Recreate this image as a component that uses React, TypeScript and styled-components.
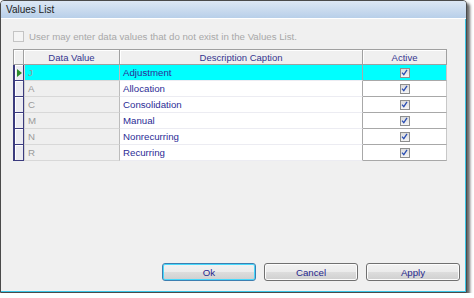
import React, { useState } from 'react';
import styled, { createGlobalStyle } from 'styled-components';

const GlobalStyle = createGlobalStyle`
    html, body {
        margin: 0;
        padding: 0;
        background: #ffffff;
    }
    body {
        font-family: "Liberation Sans", Arial, sans-serif;
        font-size: 9px;
    }
`;

interface IValue {
    code: string,
    caption: string,
    active: boolean
}

const Window = styled.div`
    width: 465px;
    height: 291px;
    border: 1px solid #4a4a4a;
    border-radius: 4px 4px 0 0;
    box-shadow: 3px 3px 3px rgba(0, 0, 0, 0.6);
    display: flex;
    flex-direction: column;
    overflow: hidden;
    background: #f0f0f0;
`;

const TitleBar = styled.div`
    height: 17px;
    flex: none;
    display: flex;
    align-items: center;
    padding-left: 5px;
    background: linear-gradient(#dce7f4, #b8cfe9);
    border-bottom: 1px solid #ffffff;
    color: #1e1e1e;
    font-size: 10px;
`;

const Body = styled.div`
    flex: 1;
    display: flex;
    flex-direction: column;
    padding: 12px 0 0 12px;
    border-right: 1px solid #3cc6e6;
    border-bottom: 1px solid #3cc6e6;
`;

const OptionRow = styled.label`
    display: flex;
    align-items: center;
    gap: 5px;
    height: 10px;
    color: #a8a8a8;
    font-size: 9.7px;
`;

const DisabledBox = styled.span`
    width: 9px;
    height: 9px;
    border: 1px solid #c4c4c4;
    background: #f4f4f4;
`;

const Grid = styled.div`
    margin-top: 8px;
    width: 434px;
    display: grid;
    grid-template-columns: 11px 96px 243px 84px;
    grid-auto-rows: 16px;
`;

const HeaderCell = styled.div`
    display: flex;
    align-items: center;
    justify-content: center;
    background: #f0f0f0;
    border: 1px solid #a0a0a0;
    border-left-width: 0;
    box-shadow: inset 1px 1px 0 #ffffff;
    color: #35358f;
    font-size: 9.5px;
    &:first-child {
        border-left-width: 1px;
    }
`;

const RowHead = styled.div`
    display: flex;
    align-items: center;
    padding-left: 2px;
    background: #ebebf2;
    border: 1px solid #3b3b7e;
    border-top-width: 0;
    border-left-width: 2px;
    box-shadow: inset 1px 1px 0 #ffffff;
`;

const Pointer = styled.span`
    width: 0;
    height: 0;
    border-top: 4px solid transparent;
    border-bottom: 4px solid transparent;
    border-left: 5px solid #2c8c2c;
`;

const Cell = styled.div<{ selected: boolean, kind: 'code' | 'caption' | 'active' }>`
    display: flex;
    align-items: center;
    justify-content: ${props => props.kind === 'active' ? 'center' : 'flex-start'};
    padding-left: ${props => props.kind === 'active' ? '0' : '3px'};
    background: ${props => props.selected ? '#00ffff' : props.kind === 'code' ? '#efefef' : '#ffffff'};
    color: ${props => props.kind === 'code' ? '#9a9a9a' : '#2c2c96'};
    font-size: 9.7px;
    border-bottom: 1px solid ${props => props.kind === 'active' ? '#a8a8a8' : props.kind === 'code' ? '#d8d8d8' : '#ececf2'};
    border-right: 1px solid ${props => props.kind === 'caption' ? '#a8a8a8' : props.kind === 'code' ? '#bcbcbc' : '#c8c8c8'};
    border-left: ${props => props.kind === 'code' ? '1px solid #d0d0d0' : '0'};
    box-sizing: border-box;
`;

const Check = styled.span`
    width: 8px;
    height: 8px;
    border: 1px solid #8e8f8f;
    background: linear-gradient(#dcdcdc, #f4f4f4);
    display: flex;
    align-items: center;
    justify-content: center;
`;

const Footer = styled.div`
    margin-top: auto;
    margin-bottom: 10px;
    align-self: flex-end;
    margin-right: 5px;
    display: flex;
    gap: 8px;
`;

const Button = styled.button<{ primary?: boolean }>`
    width: 94px;
    height: 18px;
    padding: 0;
    font-family: "Liberation Sans", Arial, sans-serif;
    font-size: 9.7px;
    color: #27278c;
    border-radius: 3px;
    border: 1px solid ${props => props.primary ? '#3c7fb1' : '#707070'};
    box-shadow: inset 0 0 0 1px ${props => props.primary ? '#48d8fb' : '#fcfcfc'};
    background: linear-gradient(#f2f2f2 0%, #ebebeb 50%, #dddddd 51%, #cfcfcf 100%);
`;

const values: IValue[] = [
    {code: 'J', caption: 'Adjustment', active: true},
    {code: 'A', caption: 'Allocation', active: true},
    {code: 'C', caption: 'Consolidation', active: true},
    {code: 'M', caption: 'Manual', active: true},
    {code: 'N', caption: 'Nonrecurring', active: true},
    {code: 'R', caption: 'Recurring', active: true},
];

const CheckMark = () => <svg width="7" height="7" viewBox="0 0 7 7">
    <path d="M1 3.6 L2.8 5.6 L6 0.8" fill="none" stroke="#2b4fb3" strokeWidth="1.3"/>
</svg>

const App = () => {
    const [current, setCurrent] = useState(0);

    return <>
        <GlobalStyle/>
        <Window>
            <TitleBar>Values List</TitleBar>
            <Body>
                <OptionRow>
                    <DisabledBox/>
                    User may enter data values that do not exist in the Values List.
                </OptionRow>
                <Grid>
                    <HeaderCell/>
                    <HeaderCell>Data Value</HeaderCell>
                    <HeaderCell>Description Caption</HeaderCell>
                    <HeaderCell>Active</HeaderCell>
                    {values.map((v, i) => <React.Fragment key={v.code}>
                        <RowHead onClick={() => setCurrent(i)}>
                            {i === current && <Pointer/>}
                        </RowHead>
                        <Cell kind="code" selected={i === current}>{v.code}</Cell>
                        <Cell kind="caption" selected={i === current}>{v.caption}</Cell>
                        <Cell kind="active" selected={i === current}>
                            <Check>{v.active && <CheckMark/>}</Check>
                        </Cell>
                    </React.Fragment>)}
                </Grid>
                <Footer>
                    <Button primary>Ok</Button>
                    <Button>Cancel</Button>
                    <Button>Apply</Button>
                </Footer>
            </Body>
        </Window>
    </>
}

export default App;
